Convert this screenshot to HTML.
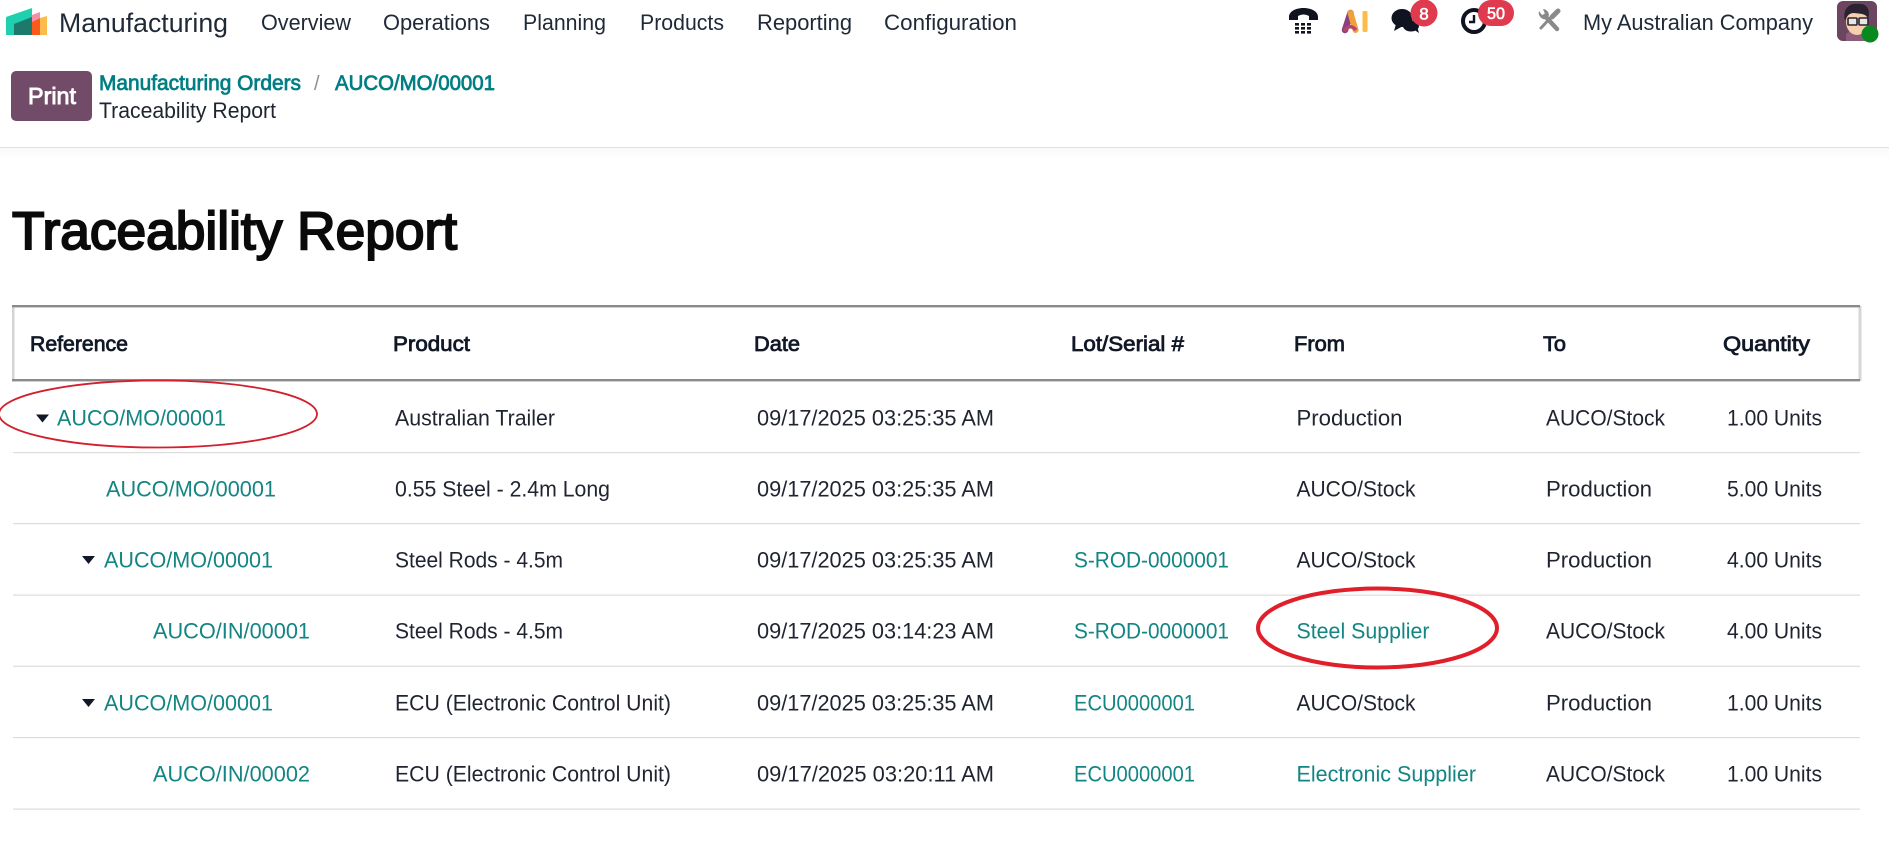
<!DOCTYPE html>
<html lang="en">
<head>
<meta charset="utf-8">
<title>Traceability Report</title>
<style>
html,body{margin:0;padding:0;background:#fff;width:1889px;height:867px;overflow:hidden}
svg{display:block}
text{font-family:"Liberation Sans",sans-serif;white-space:pre}
.n{font-size:22px;fill:#1f2937}
.b{font-size:22px;fill:#1f2430}
.l{font-size:22px;fill:#138583}
.h{font-size:21.5px;fill:#111827;stroke:#111827;stroke-width:.8px}
.c{font-size:21.5px;fill:#017e84;stroke:#017e84;stroke-width:.75px}
</style>
</head>
<body>
<svg xmlns="http://www.w3.org/2000/svg" width="1889" height="867" viewBox="0 0 1889 867">
<defs>
<linearGradient id="sh" x1="0" y1="0" x2="0" y2="1"><stop offset="0" stop-color="#f8f9fa"/><stop offset="1" stop-color="#ffffff"/></linearGradient>
</defs>
<rect width="1889" height="867" fill="#fff"/>

<!-- logo -->
<polygon points="6,17 32,8 32,35 6,35" fill="#1fd0ae"/>
<polygon points="14,24 32,17 32,35 14,35" fill="#1b7a6b"/>
<polygon points="32,15 40,12 40,18 32,22" fill="#f58fa3"/>
<polygon points="32,22 40,18 40,35 32,35" fill="#fa5a1e"/>
<polygon points="40,18 47,16 47,35 40,35" fill="#fcbc4b"/>

<!-- nav -->
<text x="59" y="32" font-size="26.5" fill="#1f2937" textLength="169" lengthAdjust="spacingAndGlyphs">Manufacturing</text>
<text class="n" x="261" y="30" textLength="90" lengthAdjust="spacingAndGlyphs">Overview</text>
<text class="n" x="383" y="30" textLength="107" lengthAdjust="spacingAndGlyphs">Operations</text>
<text class="n" x="523" y="30" textLength="83" lengthAdjust="spacingAndGlyphs">Planning</text>
<text class="n" x="640" y="30" textLength="84" lengthAdjust="spacingAndGlyphs">Products</text>
<text class="n" x="757" y="30" textLength="95" lengthAdjust="spacingAndGlyphs">Reporting</text>
<text class="n" x="884" y="30" textLength="133" lengthAdjust="spacingAndGlyphs">Configuration</text>

<!-- phone -->
<path d="M1289 17 C1289 5 1318 5 1318 17 L1318 20 L1309 20 L1309 16 C1305 14 1302 14 1298 16 L1298 20 L1289 20 Z" fill="#0f1420"/>
<g fill="#0f1420">
<rect x="1295" y="23" width="4" height="2.6"/><rect x="1301" y="23" width="4" height="2.6"/><rect x="1307" y="23" width="4" height="2.6"/>
<rect x="1295" y="27" width="4" height="2.6"/><rect x="1301" y="27" width="4" height="2.6"/><rect x="1307" y="27" width="4" height="2.6"/>
<rect x="1295" y="31" width="4" height="2.6"/><rect x="1301" y="31" width="4" height="2.6"/><rect x="1307" y="31" width="4" height="2.6"/>
</g>

<!-- AI -->
<path d="M1345 30 L1350.5 13" stroke="#8a3f80" stroke-width="6.5" stroke-linecap="round" fill="none"/>
<path d="M1350.5 13 L1355.5 30" stroke="#f0a13a" stroke-width="6" stroke-linecap="round" fill="none"/>
<path d="M1344 31 Q1350 23 1356 30" stroke="#b5476a" stroke-width="3.5" fill="none"/>
<rect x="1362.5" y="11" width="5" height="21" rx="1.5" fill="#fbbc48"/>

<!-- chat -->
<ellipse cx="1402" cy="18" rx="10.5" ry="9" fill="#0f1420"/>
<path d="M1396 24 L1394 31 L1403 26 Z" fill="#0f1420"/>
<ellipse cx="1411" cy="26" rx="8" ry="5.5" fill="#0f1420"/>
<path d="M1413 29 L1419 33 L1417 26 Z" fill="#0f1420"/>
<circle cx="1424" cy="13" r="13.5" fill="#df3a4d"/>
<text x="1424" y="19.5" font-size="17" fill="#fff" stroke="#fff" stroke-width=".6" text-anchor="middle">8</text>

<!-- clock -->
<circle cx="1474" cy="21" r="11" fill="none" stroke="#0f1420" stroke-width="4"/>
<path d="M1474 15 V22 H1469" fill="none" stroke="#0f1420" stroke-width="2.4"/>
<rect x="1478" y="0" width="36" height="26" rx="13" fill="#df3a4d"/>
<text x="1496" y="19" font-size="17" fill="#fff" stroke="#fff" stroke-width=".6" text-anchor="middle" textLength="18" lengthAdjust="spacingAndGlyphs">50</text>

<!-- tools -->
<path d="M1553 15 L1541 28" stroke="#8a8a8a" stroke-width="3" stroke-linecap="round"/>
<path d="M1552 17 L1558 11" stroke="#8a8a8a" stroke-width="5" stroke-linecap="round"/>
<path d="M1545 16 L1557 29" stroke="#8a8a8a" stroke-width="4.5" stroke-linecap="round"/>
<path d="M1539 11 A6.5 6.5 0 0 0 1547 19 L1549 15 A6.5 6.5 0 0 0 1543 9 L1545 14 L1542 15 Z" fill="#8a8a8a"/>

<text x="1583" y="30" font-size="22" fill="#1f2937" textLength="230" lengthAdjust="spacingAndGlyphs">My Australian Company</text>

<!-- avatar -->
<rect x="1837" y="1" width="40" height="40" rx="6" fill="#6c4560"/>
<path d="M1846 41 V34 L1852 30 H1866 V41 Z" fill="#8c5c7a"/>
<ellipse cx="1857" cy="22" rx="11" ry="13" fill="#f6cfae"/>
<path d="M1845 21 C1842 8 1850 3 1858 4 C1867 3 1871 10 1868 19 C1866 13 1860 14 1854 13 C1850 13 1847 15 1845 21 Z" fill="#2a2230"/>
<rect x="1848" y="18" width="9" height="7" rx="1" fill="#e9e6e2" stroke="#2a2230" stroke-width="1.6"/>
<rect x="1859" y="18" width="9" height="7" rx="1" fill="#e9e6e2" stroke="#2a2230" stroke-width="1.6"/>
<circle cx="1870" cy="34" r="8.5" fill="#08891f"/>

<!-- control panel -->
<rect x="11" y="71" width="81" height="50" rx="5" fill="#714b67"/>
<text x="28" y="104" font-size="23" fill="#fff" stroke="#fff" stroke-width=".9" textLength="48" lengthAdjust="spacingAndGlyphs">Print</text>
<text class="c" x="99" y="90" textLength="202" lengthAdjust="spacingAndGlyphs">Manufacturing Orders</text>
<text x="314" y="90" font-size="20" fill="#8a9099">/</text>
<text class="c" x="335" y="90" textLength="160" lengthAdjust="spacingAndGlyphs">AUCO/MO/00001</text>
<text x="99" y="118" font-size="22" fill="#1f2430" textLength="177" lengthAdjust="spacingAndGlyphs">Traceability Report</text>
<rect x="0" y="147" width="1889" height="1" fill="#dfe2e5"/>
<rect x="0" y="148" width="1889" height="12" fill="url(#sh)"/>

<!-- title -->
<text x="12" y="249" font-size="53" fill="#0a0a0a" stroke="#0a0a0a" stroke-width="2" textLength="445" lengthAdjust="spacingAndGlyphs">Traceability Report</text>

<!-- table frame -->
<rect x="12" y="306" width="2.5" height="75" fill="#d4d4d4"/>
<rect x="1858.5" y="306" width="3" height="75" fill="#d6d6d6"/>
<rect x="12" y="305" width="1848" height="2.4" fill="#8a8a8a"/>
<rect x="12" y="379" width="1848" height="2.4" fill="#8a8a8a"/>

<!-- header -->
<text class="h" x="30" y="351" textLength="98" lengthAdjust="spacingAndGlyphs">Reference</text>
<text class="h" x="393" y="351" textLength="77" lengthAdjust="spacingAndGlyphs">Product</text>
<text class="h" x="754" y="351" textLength="46" lengthAdjust="spacingAndGlyphs">Date</text>
<text class="h" x="1071" y="351" textLength="113" lengthAdjust="spacingAndGlyphs">Lot/Serial #</text>
<text class="h" x="1294" y="351" textLength="51" lengthAdjust="spacingAndGlyphs">From</text>
<text class="h" x="1543" y="351" textLength="23" lengthAdjust="spacingAndGlyphs">To</text>
<text class="h" x="1723" y="351" textLength="87" lengthAdjust="spacingAndGlyphs">Quantity</text>

<!-- row lines -->
<g fill="#dcdcdc">
<rect x="13" y="452" width="1847" height="1.2"/>
<rect x="13" y="523" width="1847" height="1.2"/>
<rect x="13" y="594.5" width="1847" height="1.2"/>
<rect x="13" y="665.7" width="1847" height="1.2"/>
<rect x="13" y="737" width="1847" height="1.2"/>
<rect x="13" y="808.5" width="1847" height="1.2"/>
</g>

<!-- row 1 -->
<polygon points="36,414.5 49,414.5 42.5,422.5" fill="#111827"/>
<text class="l" x="57" y="425.5" textLength="169" lengthAdjust="spacingAndGlyphs">AUCO/MO/00001</text>
<text class="b" x="395" y="425.5" textLength="160" lengthAdjust="spacingAndGlyphs">Australian Trailer</text>
<text class="b" x="757" y="425.5" textLength="237" lengthAdjust="spacingAndGlyphs">09/17/2025 03:25:35 AM</text>
<text class="b" x="1296.5" y="425.5" textLength="106" lengthAdjust="spacingAndGlyphs">Production</text>
<text class="b" x="1546" y="425.5" textLength="119" lengthAdjust="spacingAndGlyphs">AUCO/Stock</text>
<text class="b" x="1727" y="425.5" textLength="95" lengthAdjust="spacingAndGlyphs">1.00 Units</text>

<!-- row 2 -->
<text class="l" x="106" y="496.5" textLength="170" lengthAdjust="spacingAndGlyphs">AUCO/MO/00001</text>
<text class="b" x="395" y="496.5" textLength="215" lengthAdjust="spacingAndGlyphs">0.55 Steel - 2.4m Long</text>
<text class="b" x="757" y="496.5" textLength="237" lengthAdjust="spacingAndGlyphs">09/17/2025 03:25:35 AM</text>
<text class="b" x="1296.5" y="496.5" textLength="119" lengthAdjust="spacingAndGlyphs">AUCO/Stock</text>
<text class="b" x="1546" y="496.5" textLength="106" lengthAdjust="spacingAndGlyphs">Production</text>
<text class="b" x="1727" y="496.5" textLength="95" lengthAdjust="spacingAndGlyphs">5.00 Units</text>

<!-- row 3 -->
<polygon points="82,556 95,556 88.5,564" fill="#111827"/>
<text class="l" x="104" y="567.5" textLength="169" lengthAdjust="spacingAndGlyphs">AUCO/MO/00001</text>
<text class="b" x="395" y="567.5" textLength="168" lengthAdjust="spacingAndGlyphs">Steel Rods - 4.5m</text>
<text class="b" x="757" y="567.5" textLength="237" lengthAdjust="spacingAndGlyphs">09/17/2025 03:25:35 AM</text>
<text class="l" x="1074" y="567.5" textLength="155" lengthAdjust="spacingAndGlyphs">S-ROD-0000001</text>
<text class="b" x="1296.5" y="567.5" textLength="119" lengthAdjust="spacingAndGlyphs">AUCO/Stock</text>
<text class="b" x="1546" y="567.5" textLength="106" lengthAdjust="spacingAndGlyphs">Production</text>
<text class="b" x="1727" y="567.5" textLength="95" lengthAdjust="spacingAndGlyphs">4.00 Units</text>

<!-- row 4 -->
<text class="l" x="153" y="638.5" textLength="157" lengthAdjust="spacingAndGlyphs">AUCO/IN/00001</text>
<text class="b" x="395" y="638.5" textLength="168" lengthAdjust="spacingAndGlyphs">Steel Rods - 4.5m</text>
<text class="b" x="757" y="638.5" textLength="237" lengthAdjust="spacingAndGlyphs">09/17/2025 03:14:23 AM</text>
<text class="l" x="1074" y="638.5" textLength="155" lengthAdjust="spacingAndGlyphs">S-ROD-0000001</text>
<text class="l" x="1296.5" y="638.5" textLength="133" lengthAdjust="spacingAndGlyphs">Steel Supplier</text>
<text class="b" x="1546" y="638.5" textLength="119" lengthAdjust="spacingAndGlyphs">AUCO/Stock</text>
<text class="b" x="1727" y="638.5" textLength="95" lengthAdjust="spacingAndGlyphs">4.00 Units</text>

<!-- row 5 -->
<polygon points="82,699 95,699 88.5,707" fill="#111827"/>
<text class="l" x="104" y="710.5" textLength="169" lengthAdjust="spacingAndGlyphs">AUCO/MO/00001</text>
<text class="b" x="395" y="710.5" textLength="276" lengthAdjust="spacingAndGlyphs">ECU (Electronic Control Unit)</text>
<text class="b" x="757" y="710.5" textLength="237" lengthAdjust="spacingAndGlyphs">09/17/2025 03:25:35 AM</text>
<text class="l" x="1074" y="710.5" textLength="121" lengthAdjust="spacingAndGlyphs">ECU0000001</text>
<text class="b" x="1296.5" y="710.5" textLength="119" lengthAdjust="spacingAndGlyphs">AUCO/Stock</text>
<text class="b" x="1546" y="710.5" textLength="106" lengthAdjust="spacingAndGlyphs">Production</text>
<text class="b" x="1727" y="710.5" textLength="95" lengthAdjust="spacingAndGlyphs">1.00 Units</text>

<!-- row 6 -->
<text class="l" x="153" y="781.5" textLength="157" lengthAdjust="spacingAndGlyphs">AUCO/IN/00002</text>
<text class="b" x="395" y="781.5" textLength="276" lengthAdjust="spacingAndGlyphs">ECU (Electronic Control Unit)</text>
<text class="b" x="757" y="781.5" textLength="237" lengthAdjust="spacingAndGlyphs">09/17/2025 03:20:11 AM</text>
<text class="l" x="1074" y="781.5" textLength="121" lengthAdjust="spacingAndGlyphs">ECU0000001</text>
<text class="l" x="1296.5" y="781.5" textLength="179.5" lengthAdjust="spacingAndGlyphs">Electronic Supplier</text>
<text class="b" x="1546" y="781.5" textLength="119" lengthAdjust="spacingAndGlyphs">AUCO/Stock</text>
<text class="b" x="1727" y="781.5" textLength="95" lengthAdjust="spacingAndGlyphs">1.00 Units</text>

<!-- annotations -->
<ellipse cx="158" cy="414" rx="159" ry="33.5" fill="none" stroke="#d2202e" stroke-width="1.8"/>
<ellipse cx="1377.5" cy="628" rx="119.5" ry="39.5" fill="none" stroke="#e01f2b" stroke-width="4"/>
</svg>
</body>
</html>
